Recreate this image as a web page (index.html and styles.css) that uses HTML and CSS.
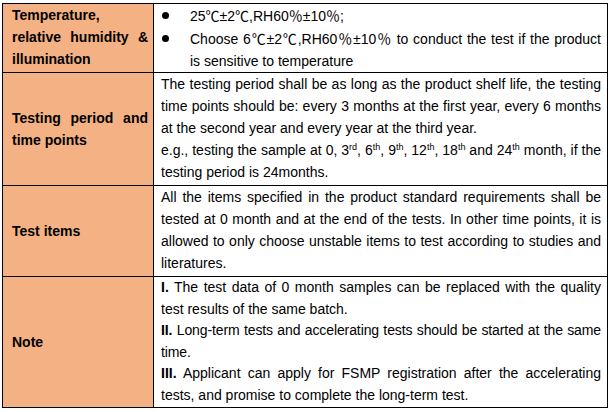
FILE: index.html
```html
<!DOCTYPE html>
<html>
<head>
<meta charset="utf-8">
<link rel="stylesheet" href="styles.css">
</head>
<body>
<table class="spec">
  <colgroup><col class="c-label"><col class="c-body"></colgroup>
  <tr class="r1">
    <td class="label top">Temperature, relative humidity &amp; illumination</td>
    <td class="body">
      <div class="bullet"><span class="dot"></span><span class="btext">25<span class="cjk">℃</span>±2<span class="cjk">℃</span>,RH60<span class="cjk">％</span>±10<span class="cjk">％</span>;</span></div>
      <div class="bullet"><span class="dot"></span><span class="btext"><span class="fullline">Choose 6<span class="cjk">℃</span>±2<span class="cjk">℃</span>,RH60<span class="cjk">％</span>±10<span class="cjk">％</span> to conduct the test if the product</span><span class="rest">is sensitive to temperature</span></span></div>
    </td>
  </tr>
  <tr class="r2">
    <td class="label">Testing period and time points</td>
    <td class="body">
      <p>The testing period shall be as long as the product shelf life, the testing time points should be: every 3 months at the first year, every 6 months at the second year and every year at the third year.</p>
      <p>e.g., testing the sample at 0, 3<sup>rd</sup>, 6<sup>th</sup>, 9<sup>th</sup>, 12<sup>th</sup>, 18<sup>th</sup> and 24<sup>th</sup> month, if the testing period is 24months.</p>
    </td>
  </tr>
  <tr class="r3">
    <td class="label">Test items</td>
    <td class="body">
      <p>All the items specified in the product standard requirements shall be tested at 0 month and at the end of the tests. In other time points, it is allowed to only choose unstable items to test according to studies and literatures.</p>
    </td>
  </tr>
  <tr class="r4">
    <td class="label">Note</td>
    <td class="body">
      <p><b>I.</b> The test data of 0 month samples can be replaced with the quality test results of the same batch.</p>
      <p class="tight"><b>II.</b> Long-term tests and accelerating tests should be started at the same time.</p>
      <p><b>III.</b> Applicant can apply for FSMP registration after the accelerating tests, and promise to complete the long-term test.</p>
    </td>
  </tr>
</table>
</body>
</html>
```
FILE: styles.css
```css
html, body {
  margin: 0;
  padding: 0;
  background: #ffffff;
}
body {
  font-family: "Liberation Sans", Arial, "Noto Sans CJK SC", sans-serif;
  font-size: 14px;
  color: #000000;
}
.spec {
  border-collapse: collapse;
  table-layout: fixed;
  width: 605px;
  margin: 3px 0 0 2px;
}
.c-label { width: 151px; }
.c-body { width: 454px; }
.spec td {
  border: 1px solid #000000;
  padding: 0;
  line-height: 22px;
}
.label {
  background: #f4b183;
  font-weight: bold;
  text-align: justify;
  vertical-align: middle;
  padding: 0 5px 0 9px !important;
}
.label.top { vertical-align: top; }
.body {
  vertical-align: top;
  text-align: justify;
  padding: 0 6px 0 7px !important;
}
.body p { margin: 0; }
.body p.tight { letter-spacing: -0.1px; }
.r1 td { height: 67px; }
.r2 td { height: 112px; }
.r3 td { height: 90px; }
.r4 td { height: 130px; }
.r4 .body { line-height: 21.6px; }
.bullet {
  display: flex;
  align-items: flex-start;
}
.dot {
  flex: 0 0 auto;
  width: 7px;
  height: 7px;
  border-radius: 50%;
  background: #000000;
  margin: 8px 21px 0 1px;
}
.btext { flex: 1 1 auto; text-align: justify; }
.fullline {
  display: block;
  text-align: justify;
  text-align-last: justify;
}
.rest { display: block; }
.cjk {
  font-family: "Noto Sans CJK SC", sans-serif;
  font-size: 14px;
}
sup {
  font-size: 9px;
  line-height: 0;
  vertical-align: 5px;
}
```
